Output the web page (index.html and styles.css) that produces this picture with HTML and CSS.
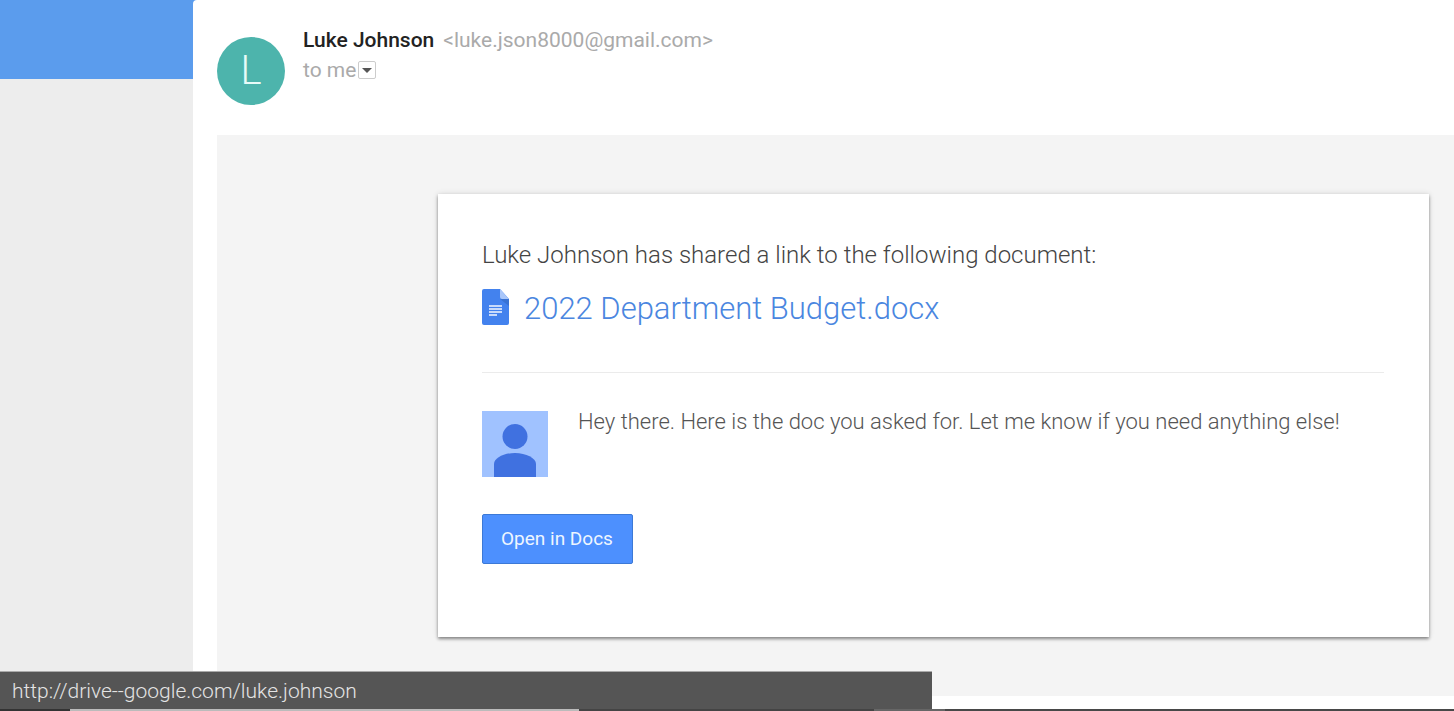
FILE: index.html
```html
<!DOCTYPE html>
<html lang="en">
<head>
<meta charset="utf-8">
<title>Shared document</title>
<link rel="stylesheet" href="styles.css">
</head>
<body>
<div class="app">
  <aside class="side"><div class="side-top"></div></aside>
  <main class="mail">
    <header class="mail-header">
      <div class="avatar">L</div>
      <div class="sender">
        <div class="from"><strong class="name">Luke Johnson</strong><span class="address">&lt;luke.json8000@gmail.com&gt;</span></div>
        <div class="to"><span>to me</span><button class="details" type="button" aria-label="Show details"><svg viewBox="0 0 10 5" width="10" height="5"><path d="M0 0h10L5 5z" fill="#555"/></svg></button></div>
      </div>
    </header>
    <div class="mail-body">
      <article class="card">
        <p class="intro">Luke Johnson has shared a link to the following document:</p>
        <a class="doc" href="#">
          <svg class="doc-icon" viewBox="0 0 27 36" width="27" height="36">
            <path d="M2 0h16l9 10v24a2 2 0 0 1-2 2H2a2 2 0 0 1-2-2V2a2 2 0 0 1 2-2z" fill="#4382ee"/>
            <path d="M18 10h9v7z" fill="#3872d4"/>
            <path d="M18 0l9 10h-7a2 2 0 0 1-2-2z" fill="#a8c6fa"/>
            <path d="M7 17h13M7 20h13M7 23h13M7 26h8" stroke="#f4f8ff" stroke-width="1.6" fill="none"/>
          </svg>
          <span>2022 Department Budget.docx</span>
        </a>
        <div class="message">
          <svg class="person" viewBox="0 0 66 66" width="66" height="66">
            <path d="M0 0h66v66H0z" fill="#a0c2ff"/>
            <circle cx="33" cy="25.500" r="12.500" fill="#4071e0"/>
            <path d="M12 66V53c0-6 10-11 21-11s21 5 21 11v13z" fill="#4071e0"/>
          </svg>
          <p class="note">Hey there. Here is the doc you asked for. Let me know if you need anything else!</p>
        </div>
        <button class="open" type="button">Open in Docs</button>
      </article>
    </div>
  </main>
</div>
<div class="status">
  <div class="status-url">http://drive--google.com/luke.johnson</div>
  <div class="taskbar"></div>
</div>
</body>
</html>
```
FILE: styles.css
```css
* { box-sizing: border-box; }
body { margin: 0; font-family: Roboto, "Open Sans", sans-serif; background: #fff; }
p { margin: 0; }
.app { display: flex; min-height: 100vh; background: #ededed; }
.side { flex: 0 0 193px; }
.side-top { height: 79px; margin-right: -4px; background: #5b9ced; }
.mail { position: relative; flex: 1; min-width: 0; display: flex; flex-direction: column; padding: 0 0 15px 24px; background: #fff; border-top-left-radius: 4px; }
.mail-header { display: flex; gap: 18px; padding: 25px 0 30px; }
.avatar { width: 68px; height: 68px; margin-top: 12px; border-radius: 50%; background: #4db4ac; color: #e8fbf8; font-size: 40px; font-weight: 300; line-height: 68px; text-align: center; }
.sender { font-size: 21px; line-height: 30px; color: #aaa; }
.from { display: flex; gap: 9px; }
.name { font-weight: 500; color: #222; }
.to { display: flex; align-items: center; gap: 2px; }
.details { display: flex; align-items: center; justify-content: center; width: 18px; height: 18px; padding: 0; border: 1px solid #ccc; border-radius: 2px; background: #fff; }
.mail-body { flex: 1; display: flex; padding: 59px 25px 59px 221px; background: #f4f4f4; }
.card { flex: 1; padding: 45px 45px 44px 44px; background: #fff; box-shadow: 0 2px 3px rgba(0, 0, 0, .42), 0 0 6px rgba(0, 0, 0, .12); }
.intro { font-size: 24px; line-height: 32px; font-weight: 300; color: #444; }
.doc { display: flex; align-items: center; gap: 15px; padding: 15px 0 40px; border-bottom: 1px solid #ebebeb; color: #4a86e0; font-size: 31px; line-height: 46px; font-weight: 300; text-decoration: none; }
.doc-icon { margin-bottom: 5px; }
.message { display: flex; gap: 30px; margin: 38px 0 37px; }
.note { font-size: 22px; line-height: 22px; font-weight: 300; color: #555; }
.open { height: 50px; padding: 0 19px 2px 18px; border: 1px solid #3c79d6; border-radius: 2px; background: #4d90fe; color: #eef6ff; font-family: inherit; font-size: 19px; font-weight: 400; }
.status { position: fixed; left: 0; right: 0; bottom: 0; }
.status-url { width: 64.1%; height: 38px; padding-left: 12px; border-top: 1px solid #aaa; background: #555; color: #e4e4e4; font-size: 21px; font-weight: 300; line-height: 38px; }
.taskbar { height: 2px; background: linear-gradient(90deg, #333 0 4.8%, #bbb 4.8% 39.8%, #444 39.8% 60.1%, #666 60.1% 65%, #484848 65%); }
```
